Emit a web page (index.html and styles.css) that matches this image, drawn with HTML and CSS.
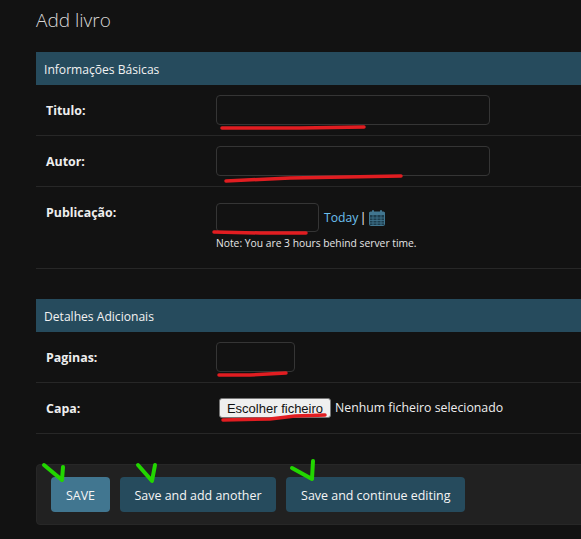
FILE: index.html
```html
<!DOCTYPE html>
<html lang="en">
<head>
  <meta charset="UTF-8">
  <title>Add livro</title>
  <link rel="stylesheet" href="styles.css">
</head>
<body>

<div class="content">
  <h1>Add livro</h1>

  <form>
    <div class="module">
      <h2>Informações Básicas</h2>
      <div class="form-row">
        <label>Titulo:</label>
        <input type="text" class="input-long">
      </div>
      <div class="form-row">
        <label>Autor:</label>
        <input type="text" class="input-long">
      </div>
      <div class="form-row date-row">
        <label>Publicação:</label>
        <div>
          <p class="datetime">
            <input type="text" class="input-date">
            <a href="#" class="today">Today</a>
            <span class="sep">|</span>
            <svg class="cal" width="16" height="16" viewBox="0 0 16 16">
              <rect x="0.5" y="2" width="15" height="13.5" rx="1" fill="#1d3d4d" stroke="#417690"/>
              <rect x="0.5" y="2" width="15" height="3" fill="#417690"/>
              <rect x="3" y="0" width="2" height="3.5" rx="1" fill="#417690"/>
              <rect x="11" y="0" width="2" height="3.5" rx="1" fill="#417690"/>
              <path d="M1 8h14M1 10.5h14M1 13h14M4 5v10M8 5v10M12 5v10" stroke="#417690" stroke-width="0.8"/>
            </svg>
          </p>
          <div class="timezone">Note: You are 3 hours behind server time.</div>
        </div>
      </div>
    </div>

    <div class="module">
      <h2>Detalhes Adicionais</h2>
      <div class="form-row">
        <label>Paginas:</label>
        <input type="text" class="input-small">
      </div>
      <div class="form-row">
        <label>Capa:</label>
        <div class="file-field">
          <button type="button" class="file-btn">Escolher ficheiro</button>
          <span class="file-name">Nenhum ficheiro selecionado</span>
        </div>
      </div>
    </div>

    <div class="submit-row">
      <button type="submit" class="btn btn-default">SAVE</button>
      <button type="button" class="btn">Save and add another</button>
      <button type="button" class="btn btn-last">Save and continue editing</button>
    </div>
  </form>
</div>

<!-- marks drawn on top of the screenshot -->
<svg class="marks" width="581" height="539" viewBox="0 0 581 539">
  <g class="red">
    <path d="M222 128 L300 128 L364 127"/>
    <path d="M226 181 L290 178 L401 176"/>
    <path d="M214 232 L260 233 L306 233"/>
    <path d="M219 375 L250 375 L286 373"/>
    <path d="M223 420 L270 419 L295 416 L325 415"/>
  </g>
  <g class="green">
    <path d="M44 465 L62 480 L63 467"/>
    <path d="M138 465 L152 481 L155 465"/>
    <path d="M292 468 L312 479 L313 461"/>
  </g>
</svg>

</body>
</html>
```

FILE: styles.css
```css
html, body {
  height: 100%;
}
body {
  margin: 0;
  background-color: #121212;
  color: #eeeeee;
  font-family: "Open Sans", "Noto Sans", Arial, sans-serif;
  font-size: 13px;
  overflow: hidden;
  position: relative;
}
.content {
  padding-left: 36px;
}
h1 {
  margin: 0;
  padding-top: 8px;
  height: 52px;
  box-sizing: border-box;
  font-size: 19px;
  line-height: 24px;
  font-weight: 300;
  color: #d8d8d8;
}
h2 {
  margin: 0;
  padding: 0 8px;
  height: 33px;
  line-height: 35px;
  font-size: 12.1px;
  font-weight: 400;
  background-color: #264b5d;
  color: #f2f2f2;
}
.module {
  margin-bottom: 30px;
}
.form-row {
  display: flex;
  padding: 10px;
  border-bottom: 1px solid #272727;
}
.form-row label {
  width: 170px;
  flex-shrink: 0;
  padding-top: 7px;
  line-height: 18px;
  font-weight: 700;
  font-size: 12.4px;
}
input[type="text"] {
  height: 30px;
  box-sizing: border-box;
  padding: 2px 6px;
  margin: 0;
  background: #121212;
  border: 1px solid #353535;
  border-radius: 4px;
  color: #eeeeee;
}
.input-long {
  width: 274px;
}
.input-small {
  width: 79px;
}
input.input-date {
  width: 103px;
  height: 29px;
}
.date-row {
  height: 82px;
  box-sizing: border-box;
}
.datetime {
  display: flex;
  align-items: center;
  margin: 6px 0 0;
  line-height: 29px;
}
.today {
  margin-left: 5px;
  color: #6cc0ee;
  text-decoration: none;
  font-size: 12.2px;
}
.sep {
  margin: 0 2px 0 1px;
  color: #eeeeee;
}
.cal {
  display: block;
}
.timezone {
  margin-top: 2px;
  font-size: 10.3px;
  line-height: 18px;
  color: #e6e6e6;
}
.file-field {
  display: flex;
  align-items: center;
  height: 30px;
  padding-left: 3px;
}
.file-btn {
  width: 112px;
  height: 20px;
  padding: 0;
  background: #efefef;
  border: 1px solid #767676;
  border-radius: 3px;
  color: #111111;
  font-family: "Liberation Sans", Arial, sans-serif;
  font-size: 13px;
}
.file-name {
  margin-left: 4px;
  padding-bottom: 2px;
  font-size: 12.3px;
}
.submit-row {
  display: flex;
  gap: 10px;
  margin-right: -20px;
  padding: 12px 14px;
  height: 61px;
  box-sizing: border-box;
  background-color: #212121;
  border: 1px solid #272727;
  border-radius: 4px;
}
.btn {
  height: 35px;
  padding: 1px 14.5px 0;
  background-color: #264b5d;
  border: none;
  border-radius: 4px;
  color: #f5f5f5;
  font-family: inherit;
  font-size: 12.45px;
  white-space: nowrap;
}
.btn-default {
  padding: 1px 15px 0;
  background-color: #417690;
}
.btn-last {
  padding: 1px 15px 0;
}
.marks {
  position: absolute;
  top: 0;
  left: 0;
  pointer-events: none;
}
.marks path {
  fill: none;
  stroke-linecap: round;
  stroke-linejoin: round;
}
.marks .red path {
  stroke: #e11d21;
  stroke-width: 3.5;
}
.marks .green path {
  stroke: #22d600;
  stroke-width: 4;
}
```
